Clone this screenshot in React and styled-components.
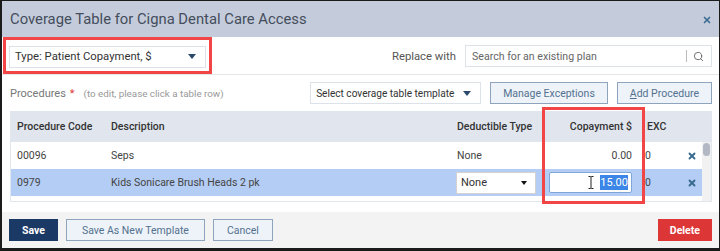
import React from 'react';
import styled, { createGlobalStyle } from 'styled-components';
import { Search, X } from 'lucide-react';

const GlobalStyle = createGlobalStyle`
  html, body {
    margin: 0;
    padding: 0;
    background: #fff;
  }
  body {
    font-family: Roboto, "Liberation Sans", Arial, sans-serif;
    font-size: 10.5px;
    color: #333;
  }
  * { box-sizing: border-box; }
`;

// Whole dialog
const Modal = styled.div`
  width: 720px;
  height: 251px;
  border: 1px solid #1b1b1b;
  border-left-width: 2px;
  border-bottom-width: 3px;
  display: flex;
  flex-direction: column;
  background: #fff;
  overflow: hidden;
`;

const Header = styled.div`
  height: 36px;
  flex: none;
  background: #c4ccdb;
  display: flex;
  align-items: center;
  justify-content: space-between;
  padding: 0 7px 0 8px;
`;

const Title = styled.div`
  font-size: 14.8px;
  color: #444d5c;
`;

const Close = styled.span`
  display: flex;
  color: #3a6c90;
  margin-top: 1px;
`;

const TopBar = styled.div`
  height: 38px;
  flex: none;
  display: flex;
  align-items: stretch;
  justify-content: space-between;
  padding: 0 7px 0 1px;
  border-bottom: 1px solid #e6e6e6;
`;

const Highlight = styled.div`
  border: 3px solid #f24646;
  padding: 6px 3px 4px 3px;
  display: flex;
  align-items: center;
`;

const Select = styled.div`
  width: ${({ w }) => w}px;
  height: ${({ h }) => h || 22}px;
  border: 1px solid ${({ plain }) => (plain ? '#d2d2d2' : '#dde2ea')};
  background: #fff;
  display: flex;
  align-items: center;
  justify-content: space-between;
  padding: 0 ${({ plain }) => (plain ? 8 : 9)}px 0 ${({ plain }) => (plain ? 4 : 5)}px;
  font-size: ${({ fs }) => fs || 10.5}px;
  color: #333;
  white-space: nowrap;
`;

const Caret = styled.span`
  width: 0;
  height: 0;
  border-left: ${({ dark }) => (dark ? 3 : 4)}px solid transparent;
  border-right: ${({ dark }) => (dark ? 3 : 4)}px solid transparent;
  border-top: ${({ dark }) => (dark ? 4 : 5)}px solid ${({ dark }) => (dark ? '#111' : '#2b4a6b')};
`;

const ReplaceGroup = styled.div`
  display: flex;
  align-items: center;
  gap: 9px;
  padding-top: 1px;
`;

const Label = styled.span`
  font-size: 11.3px;
  color: #555;
`;

const SearchBox = styled.div`
  width: 247px;
  height: 22px;
  border: 1px solid #dde2ea;
  display: flex;
  align-items: center;
  padding-left: 6px;
  font-size: 10.6px;
  color: #666;
`;

const Placeholder = styled.span`
  flex: 1;
`;

const SearchIcon = styled.span`
  display: flex;
  align-items: center;
  height: 12px;
  border-left: 1px solid #bbb;
  padding: 0 7px 0 6px;
  color: #666;
`;

const ProcRow = styled.div`
  height: 36px;
  flex: none;
  display: flex;
  align-items: center;
  justify-content: space-between;
  padding: 0 7px 0 8px;
`;

const ProcLabel = styled.div`
  font-size: 11px;
  color: #777;
  display: flex;
  align-items: baseline;
`;

const Req = styled.span`
  color: #e03b3b;
  margin: 0 9px 0 4px;
`;

const Hint = styled.span`
  color: #999;
  font-size: 9.8px;
`;

const Controls = styled.div`
  display: flex;
  align-items: center;
  gap: 9px;
`;

const Button = styled.button`
  height: 22px;
  padding: 0 ${({ px }) => px || 12}px;
  font-family: inherit;
  font-size: 10.5px;
  font-weight: ${({ primary, danger }) => (primary || danger ? 700 : 400)};
  color: ${({ primary, danger }) => (primary || danger ? '#fff' : '#53718f')};
  background: ${({ primary, danger }) => (primary ? '#1a3965' : danger ? '#dc3636' : '#eef3f9')};
  border: 1px solid ${({ primary, danger }) => (primary ? '#1a3965' : danger ? '#dc3636' : '#8ea4bc')};
  border-radius: 0;
  cursor: pointer;
  white-space: nowrap;
`;

const TableArea = styled.div`
  position: relative;
  margin: 0 7px 0 8px;
`;

const Table = styled.div`
  height: 91px;
  border: 1px solid #e2e6ed;
  border-top: none;
  display: flex;
  flex-direction: column;
  overflow: hidden;
`;

const COLS = '93px 346px 93px 96px 41px 1fr';

const HeadRow = styled.div`
  height: 31px;
  flex: none;
  background: #e1e6ee;
  display: grid;
  grid-template-columns: ${COLS} 9px;
  align-items: center;
  font-weight: 500;
  font-size: 10.5px;
  color: #333;
`;

const Cell = styled.div`
  padding: 0 ${({ right }) => (right ? 7 : 0)}px 0 ${({ pl }) => (pl === undefined ? 6 : pl)}px;
  white-space: nowrap;
  overflow: hidden;
  display: flex;
  align-items: center;
  justify-content: ${({ right, center }) => (right ? 'flex-end' : center ? 'center' : 'flex-start')};
`;

const BodyWrap = styled.div`
  flex: 1;
  display: flex;
`;

const Rows = styled.div`
  flex: 1;
`;

const Row = styled.div`
  height: 27px;
  display: grid;
  grid-template-columns: ${COLS};
  align-items: center;
  background: ${({ selected }) => (selected ? '#b4cdf5' : '#fff')};
  color: #444;
  font-size: 10.5px;
`;

const ScrollTrack = styled.div`
  width: 9px;
  background: #f1f1f1;
  padding: 1px 1px;
`;

const Thumb = styled.div`
  height: 13px;
  background: #b3b9c4;
  border-radius: 4px;
`;

const RemoveIcon = styled.span`
  display: flex;
  color: #3a6c90;
  margin-left: 1px;
`;

const CopayInput = styled.div`
  width: 83px;
  height: 21px;
  margin-left: 6px;
  border: 1px solid #7ea6d9;
  border-radius: 2px;
  background: #fff;
  display: flex;
  align-items: center;
  justify-content: flex-end;
  padding-right: 3px;
  position: relative;
  font-size: 11px;
`;

const Selected = styled.span`
  background: #3b86e6;
  color: #fff;
  padding: 1px 0;
  line-height: 13px;
`;

const IBeam = styled.svg`
  position: absolute;
  left: 38px;
  top: 3px;
`;

const Annotation = styled.div`
  position: absolute;
  left: 532px;
  top: -4px;
  width: 103px;
  height: 97px;
  border: 3px solid #f24646;
  pointer-events: none;
`;

const Footer = styled.div`
  margin-top: auto;
  height: 36px;
  flex: none;
  background: #f3f3f3;
  display: flex;
  align-items: center;
  justify-content: space-between;
  padding: 0 7px;
`;

const ButtonGroup = styled.div`
  display: flex;
  gap: 8px;
`;

const Underline = styled.span`
  text-decoration: underline;
`;

const rows = [
  { code: '00096', desc: 'Seps', ded: 'None', copay: '0.00', exc: '0' },
  { code: '0979', desc: 'Kids Sonicare Brush Heads 2 pk', ded: 'None', copay: '15.00', exc: '0', editing: true },
];

export default function App() {
  return (
    <>
      <GlobalStyle />
      <Modal>
        <Header>
          <Title>Coverage Table for Cigna Dental Care Access</Title>
          <Close><X size={10} strokeWidth={4} /></Close>
        </Header>

        <TopBar>
          <Highlight>
            <Select w={197} fs={11.3}>
              Type: Patient Copayment, $
              <Caret />
            </Select>
          </Highlight>
          <ReplaceGroup>
            <Label>Replace with</Label>
            <SearchBox>
              <Placeholder>Search for an existing plan</Placeholder>
              <SearchIcon><Search size={11} strokeWidth={2} /></SearchIcon>
            </SearchBox>
          </ReplaceGroup>
        </TopBar>

        <ProcRow>
          <ProcLabel>
            Procedures<Req>*</Req>
            <Hint>(to edit, please click a table row)</Hint>
          </ProcLabel>
          <Controls>
            <Select w={171} fs={10.1}>
              Select coverage table template
              <Caret />
            </Select>
            <Button px={12}>Manage Exceptions</Button>
            <Button px={12}><Underline>A</Underline>dd Procedure</Button>
          </Controls>
        </ProcRow>

        <TableArea>
          <Table>
            <HeadRow>
              <Cell pl={6}>Procedure Code</Cell>
              <Cell pl={7}>Description</Cell>
              <Cell pl={7}>Deductible Type</Cell>
              <Cell right>Copayment $</Cell>
              <Cell pl={8}>EXC</Cell>
              <Cell />
              <Cell />
            </HeadRow>
            <BodyWrap>
              <Rows>
                {rows.map((r) => (
                  <Row key={r.code} selected={r.editing}>
                    <Cell pl={6}>{r.code}</Cell>
                    <Cell pl={7}>{r.desc}</Cell>
                    {r.editing ? (
                      <Cell pl={6}>
                        <Select plain w={80} h={22} fs={11}>
                          None
                          <Caret dark />
                        </Select>
                      </Cell>
                    ) : (
                      <Cell pl={7}>{r.ded}</Cell>
                    )}
                    {r.editing ? (
                      <Cell pl={0}>
                        <CopayInput>
                          <IBeam width="6" height="13" viewBox="0 0 6 13">
                            <path d="M0.5 0.5h2l0.5 0.6 0.5-0.6h2M3 1.1v10.8M0.5 12.5h2l0.5-0.6 0.5 0.6h2" fill="none" stroke="#222" strokeWidth="1" />
                          </IBeam>
                          <Selected>{r.copay}</Selected>
                        </CopayInput>
                      </Cell>
                    ) : (
                      <Cell right>{r.copay}</Cell>
                    )}
                    <Cell pl={6}>{r.exc}</Cell>
                    <Cell pl={0} center>
                      <RemoveIcon><X size={10} strokeWidth={4.5} /></RemoveIcon>
                    </Cell>
                  </Row>
                ))}
              </Rows>
              <ScrollTrack>
                <Thumb />
              </ScrollTrack>
            </BodyWrap>
          </Table>
          <Annotation />
        </TableArea>

        <Footer>
          <ButtonGroup>
            <Button primary px={12}>Save</Button>
            <Button px={15}>Save As New Template</Button>
            <Button px={13}>Cancel</Button>
          </ButtonGroup>
          <Button danger px={11}>Delete</Button>
        </Footer>
      </Modal>
    </>
  );
}
